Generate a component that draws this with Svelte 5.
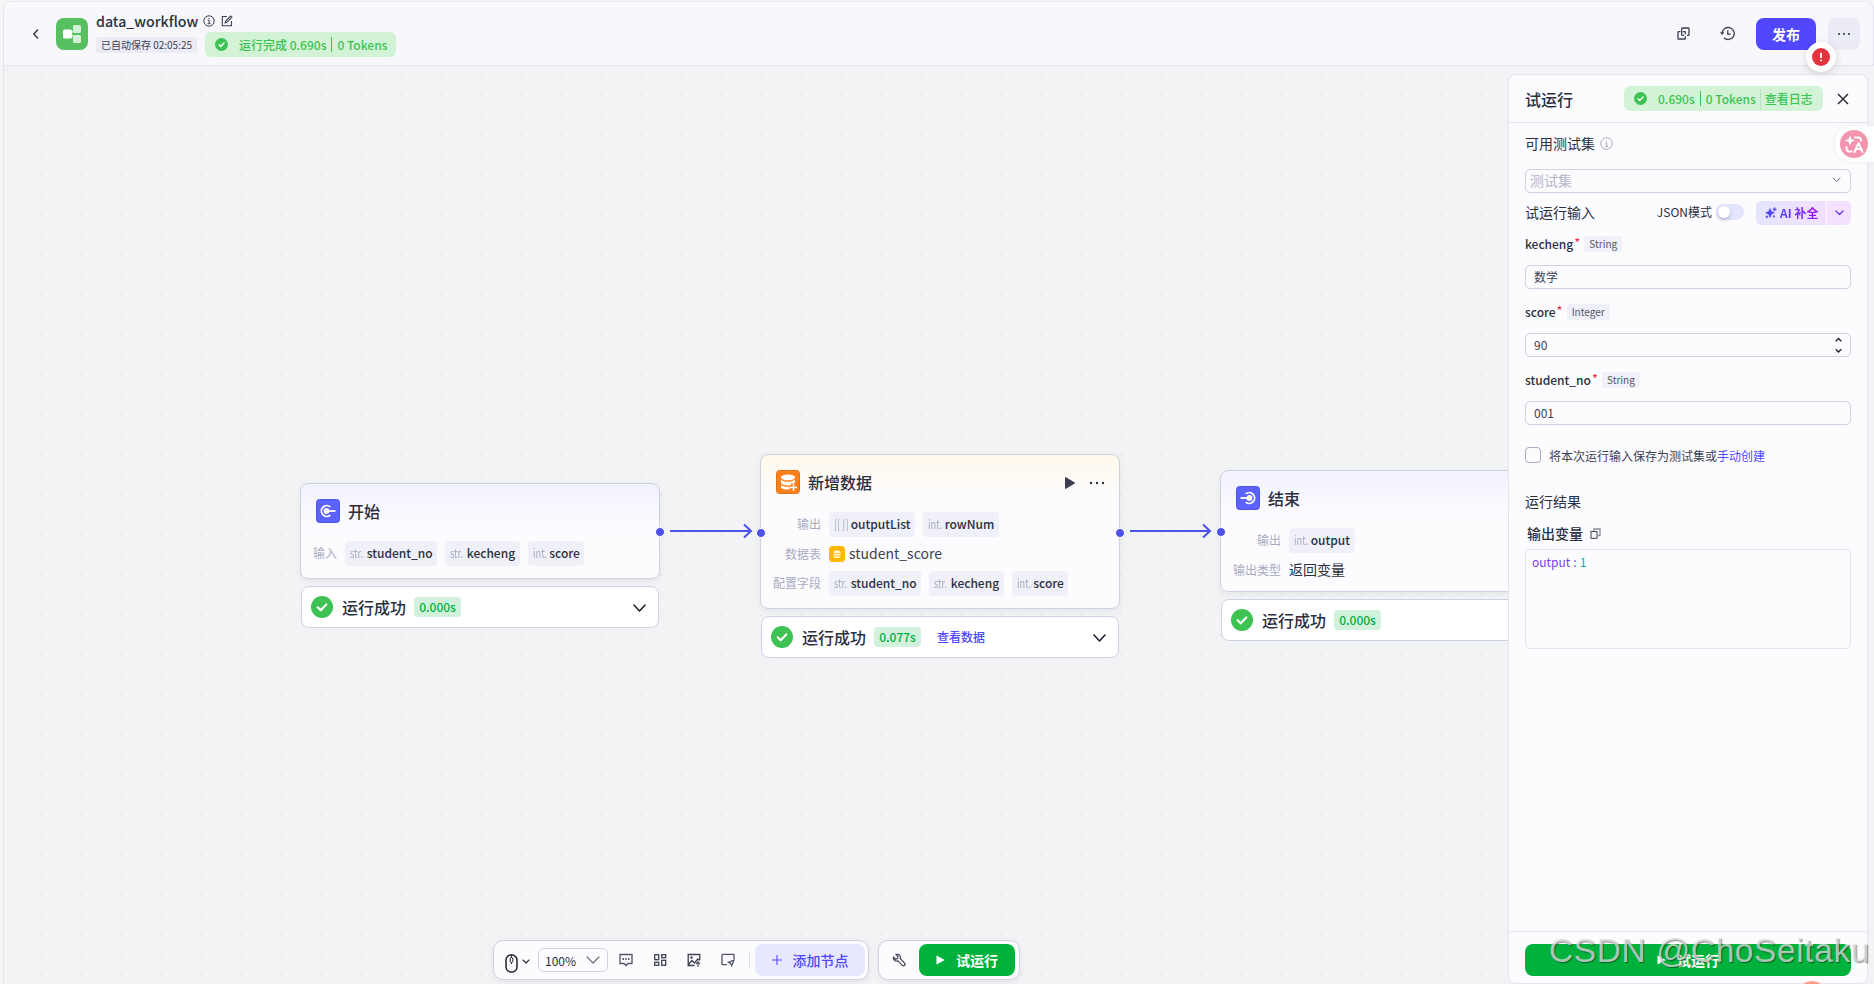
<script>
  const fields = [
    { name: 'kecheng', type: 'String', value: '数学' },
    { name: 'score', type: 'Integer', value: '90', spinner: true },
    { name: 'student_no', type: 'String', value: '001' }
  ];
  const str = (name) => ({ type: 'str.', name });
  const int = (name) => ({ type: 'int.', name });
  const nodes = [
    {
      x: 297, y: 417, h: 96, kind: 'start', title: '开始', time: '0.000s',
      rows: [{ label: '输入', chips: [str('student_no'), str('kecheng'), int('score')] }]
    },
    {
      x: 757, y: 388, h: 155, kind: 'data', title: '新增数据', time: '0.077s', link: '查看数据',
      rows: [
        { label: '输出', chips: [{ type: '[{ }]', name: 'outputList' }, int('rowNum')] },
        { label: '数据表', table: 'student_score' },
        { label: '配置字段', chips: [str('student_no'), str('kecheng'), int('score')] }
      ]
    },
    {
      x: 1217, y: 404, h: 122, kind: 'end', title: '结束', time: '0.000s',
      rows: [
        { label: '输出', chips: [int('output')] },
        { label: '输出类型', text: '返回变量' }
      ]
    }
  ];
  const ports = [[657, 466], [758, 467], [1117, 467], [1218, 466]];
</script>

{#snippet check(size)}
  <svg width={size} height={size} viewBox="0 0 22 22">
    <circle cx="11" cy="11" r="11" fill="#3ec254" />
    <path d="M6.700 11.300l3 3 5.600-5.800" fill="none" stroke="#fff" stroke-width="2.200" stroke-linecap="round" stroke-linejoin="round" />
  </svg>
{/snippet}

{#snippet chevron(w, h, color, sw)}
  <svg width={w} height={h} viewBox="0 0 {w} {h}" fill="none" stroke={color} stroke-width={sw} stroke-linecap="round" stroke-linejoin="round">
    <path d="M1 1L{w / 2} {h - 1}L{w - 1} 1" />
  </svg>
{/snippet}

<div class="app">
  <header>
    <svg class="back" width="8" height="12" viewBox="0 0 8 12" fill="none" stroke="#2b2f3f" stroke-width="1.300"><path d="M6 1.500L1.800 6 6 10.500" /></svg>
    <div class="logo">
      <svg width="32" height="32" viewBox="0 0 32 32">
        <path d="M15 15l4-3M15 16l4 4.500" stroke="#c5eac9" stroke-width="1.500" />
        <rect x="17" y="7" width="8" height="8" rx="1.500" fill="#d5f0d8" />
        <rect x="17" y="17" width="8" height="8" rx="1.500" fill="#d5f0d8" />
        <rect x="7" y="11.500" width="9" height="9" rx="1.500" fill="#fff" />
      </svg>
    </div>
    <div class="heading">
      <div class="name">
        <b>data_workflow</b>
        <svg width="12" height="12" viewBox="0 0 12 12" fill="none" stroke="#3d4152"><circle cx="6" cy="6" r="5.200" /><path d="M4.800 5.200h1.400v3.400M4.600 8.700h3M6 2.900v1.100" /></svg>
        <svg class="edit" width="12" height="12" viewBox="0 0 12 12" fill="none" stroke="#3d4152" stroke-width="1.100"><path d="M6 1.500H1.300v9.200h9.200V6M4.200 7.900l.5-1.900L9.600 1l1.300 1.300-4.900 5z" /></svg>
      </div>
      <div class="meta">
        <span class="saved">已自动保存 02:05:25</span>
        <span class="pill done">{@render check(13)}<span class="run">运行完成 0.690s</span><i></i><span>0 Tokens</span></span>
      </div>
    </div>
    <div class="actions">
      <svg width="13" height="13" viewBox="0 0 13 13" fill="none" stroke="#3d4152" stroke-width="1.300"><path d="M3.500 4.700H1.600a.6.600 0 0 0-.6.600v6.100c0 .3.300.6.600.6h6.100c.3 0 .6-.3.600-.6V9.500M6 4.700h1.700c.3 0 .6.300.6.600v2" /><path d="M7 8.300H5.300a.6.600 0 0 1-.6-.6V1.600c0-.3.300-.6.600-.6h6.100c.3 0 .6.300.6.600v6.100c0 .3-.3.600-.6.600H10" /></svg>
      <svg class="history" width="15" height="15" viewBox="0 0 15 15" fill="none" stroke="#3d4152" stroke-width="1.300"><path d="M2.200 7.500a6 6 0 1 1 1.700 4.200M7.800 4.200v4h3" /><path d="M0 6.300h4.400L2.200 9z" fill="#3d4152" stroke="none" /></svg>
      <div class="publish">发布<span class="error"><svg width="18" height="18" viewBox="0 0 18 18"><circle cx="9" cy="9" r="9" fill="#e5323f" /><path d="M9 4.800v5.200M9 11.700v1.500" stroke="#fff" stroke-width="1.800" /></svg></span></div>
      <div class="more"><svg width="12" height="2" viewBox="0 0 12 2" fill="#2b2f3f"><circle cx="1" cy="1" r="1" /><circle cx="6" cy="1" r="1" /><circle cx="11" cy="1" r="1" /></svg></div>
    </div>
  </header>

  <main>
    <div class="canvas">
      {#each nodes as n}
        <div class="node {n.kind}" style="left:{n.x}px;top:{n.y}px;height:{n.h}px">
          <div class="node-head">
            <svg class="node-icon" width="24" height="24" viewBox="0 0 24 24">
              {#if n.kind === 'data'}
                <rect x=".5" y=".5" width="23" height="23" rx="3" fill="#ff811a" stroke="#d97322" />
                <ellipse cx="12" cy="7.400" rx="7" ry="2.900" fill="#fff" />
                <path d="M5 9.500c1.500 1.800 4 2.300 7 2.300s5.500-.5 7-2.300v2.700c0 .4-.4.900-1 1.300h-3v1.800c-5 .6-9.500-.4-10-2.700zM5 14.700c1.500 1.600 5 2.300 8.500 2v2.600C9 19.900 5.300 19 5 17.300z" fill="#fff" />
                <path d="M17.500 14v7M14 17.500h7" stroke="#fff" stroke-width="1.500" />
              {:else}
                <rect x=".5" y=".5" width="23" height="23" rx="3" fill="#5c62ff" stroke="#5055e0" />
                <g transform={n.kind === 'end' ? 'translate(24 0) scale(-1 1)' : undefined}>
                  <path d="M14.300 7.900A5.400 5.400 0 1 0 14.300 16.100" fill="none" stroke="#fff" stroke-width="1.800" />
                  <circle cx="10.500" cy="12" r="2.900" fill="#fff" />
                  <path d="M11 12h8.500" stroke="#fff" stroke-width="1.800" />
                </g>
              {/if}
            </svg>
            <span>{n.title}</span>
            {#if n.kind === 'data'}
              <svg class="play" width="10" height="12" viewBox="0 0 10 12"><path d="M.5.500L9.700 6 .5 11.500z" fill="#3a3d50" stroke="#3a3d50" stroke-linejoin="round" /></svg>
              <svg width="16" height="4" viewBox="0 0 16 4" fill="#2b2f3f"><circle cx="2" cy="2" r="1.200" /><circle cx="8" cy="2" r="1.200" /><circle cx="14" cy="2" r="1.200" /></svg>
            {/if}
          </div>
          <div class="rows">
            {#each n.rows as r}
              <span class="label">{r.label}</span>
              <div class="vals">
                {#if r.chips}
                  {#each r.chips as c}
                    <span class="chip"><span class="ty"><em>{c.type}</em></span>{c.name}</span>
                  {/each}
                {:else if r.table}
                  <svg width="16" height="16" viewBox="0 0 16 16"><rect width="16" height="16" rx="3.500" fill="#ffb803" /><rect x="4.500" y="4.500" width="7" height="7.500" rx="2.500" fill="#fff6dc" /><path d="M4.500 7c2 1 5 1 7 0M4.500 9.300c2 1 5 1 7 0" stroke="#ffb803" fill="none" stroke-width=".8" /></svg>
                  <span class="plain">{r.table}</span>
                {:else}
                  <span class="plain strong">{r.text}</span>
                {/if}
              </div>
            {/each}
          </div>
        </div>
        <div class="status" style="left:{n.x + 1}px;top:{n.y + n.h + 7}px">
          {@render check(22)}
          <span class="ok">运行成功</span>
          <span class="time">{n.time}</span>
          {#if n.link}<a>{n.link}</a>{/if}
          <span class="caret">{@render chevron(13, 8, '#20222e', 1.6)}</span>
        </div>
      {/each}
      <svg class="edges" width="1230" height="490" fill="none" stroke="#4d53e8" stroke-width="2">
        <path d="M667 465h80M741 458.500l7 6.500-7 6.500M1127 465h79M1200 458.500l7 6.500-7 6.500" />
        {#each ports as [x, y]}
          <circle cx={x} cy={y} r="4.500" fill="#4d53e8" stroke="#fff" stroke-width="1" />
        {/each}
      </svg>
    </div>

    <div class="toolbars">
      <div class="bar tools">
        <svg class="mouse" width="13" height="19" viewBox="0 0 13 19" fill="none" stroke="#20222e" stroke-width="1.500"><rect x="1" y="1" width="11" height="17" rx="5" /><rect x="5.200" y="3.500" width="2.600" height="5" rx="1.300" stroke-width="1" /><path d="M6.500 1v2.500M6.500 8.500v1.500" stroke-width="1" /></svg>
        <span class="mini">{@render chevron(8, 5, '#2b2f3f', 1.1)}</span>
        <div class="zoom">100%{@render chevron(14, 8, '#6b6f80', 1.3)}</div>
        <svg width="14" height="14" viewBox="0 0 14 14" fill="none" stroke="#50546a" stroke-width="1.300"><path d="M1 1.500h12v9H9L7 12.500 5 10.500H1z" /><path d="M3.500 6h1.500M6.200 6h1.500M9 6h1.500" stroke="#20222e" stroke-width="1.500" /></svg>
        <svg width="14" height="14" viewBox="0 0 14 14" fill="none" stroke="#3d4152" stroke-width="1.300"><rect x="1.700" y="1.700" width="4" height="5" /><rect x="8.700" y="1.700" width="4" height="3" /><rect x="1.700" y="9.300" width="4" height="3" /><rect x="8.700" y="7.300" width="4" height="5" /></svg>
        <svg width="14" height="14" viewBox="0 0 14 14" fill="none" stroke="#3d4152" stroke-width="1.300"><path d="M12.800 7V1.500H1.200v11H7.500M1.500 11.500l3.500-4 2.500 2.500 3.300-4 2 1.500" /><circle cx="4.500" cy="4.500" r=".6" /><path d="M11 13.800V8.800M9 11l2-2.200 2 2.200" stroke-width="1.100" /></svg>
        <svg width="14" height="14" viewBox="0 0 14 14" fill="none" stroke="#50546a" stroke-width="1.300"><path d="M13 6V2a.7.700 0 0 0-.7-.7H1.700a.7.700 0 0 0-.7.700v9c0 .4.300.7.700.7H6" /><path d="M13 7L7.500 9.300l2 1 1.200 2.300z" /></svg>
        <i class="sep"></i>
        <div class="add"><svg width="10" height="10" viewBox="0 0 10 10" stroke="#5147ff" stroke-width="1.100"><path d="M5 0v10M0 5h10" /></svg>添加节点</div>
      </div>
      <div class="bar runbar">
        <svg width="14" height="14" viewBox="0 0 14 14" fill="none" stroke="#3d4152" stroke-width="1.200"><path d="M4.800 1.300a3.300 3.300 0 0 1 3.500 4.200l4.300 4.600a1.500 1.500 0 0 1-2.200 2.200L6 7.900A3.300 3.300 0 0 1 1.500 4.200l2 2 2-.6.500-2-2-2z" /></svg>
        <div class="go"><svg width="9" height="10" viewBox="0 0 9 10"><path d="M.5.500L8.800 5 .5 9.500z" fill="#fff" /></svg>试运行</div>
      </div>
    </div>

    <aside>
      <div class="p-head">
        <h2>试运行</h2>
        <span class="pill log">{@render check(13)}<span class="run">0.690s</span><i></i><span>0 Tokens</span><u></u><span class="view">查看日志</span></span>
        <svg width="12" height="12" viewBox="0 0 12 12" stroke="#20222e" stroke-width="1.400"><path d="M1 1l10 10M11 1L1 11" /></svg>
      </div>
      <div class="p-body">
        <div class="line set">可用测试集<svg width="13" height="13" viewBox="0 0 13 13" fill="none" stroke="#a6a8bd"><circle cx="6.500" cy="6.500" r="5.800" /><path d="M5.300 5.800h1.400v3.500M5.200 9.500h3M6.500 3.300v1.200" /></svg></div>
        <div class="input select">测试集{@render chevron(9, 5.5, '#6b6f80', 1)}</div>
        <div class="line mode">
          <span class="cap">试运行输入</span>
          <span class="json">JSON模式</span>
          <span class="toggle"></span>
          <span class="ai">
            <svg width="12" height="12" viewBox="0 0 12 12" fill="#5147ff" stroke="#5147ff" stroke-width=".5" stroke-linejoin="round"><path d="M5 1.500l1.400 2.900 3 1.400-3 1.400L5 10.600 3.600 7.200.5 5.800l3.100-1.400zM9.600.3l.6 1.400 1.400.6-1.400.6-.6 1.400L9 2.900l-1.400-.6L9 1.700z" /><circle cx="1.800" cy="9.800" r="1" /><circle cx="8.900" cy="9.400" r=".8" /></svg>
            <b>AI 补全</b>
          </span>
          <span class="ai-more">{@render chevron(9, 5.5, '#6a32f0', 1.3)}</span>
        </div>
        {#each fields as f}
          <div class="field"><span class="fname">{f.name}</span><sup>*</sup><span class="tag">{f.type}</span></div>
          <div class="input">
            {f.value}
            {#if f.spinner}
              <svg width="7" height="17" viewBox="0 0 7 17" fill="none" stroke="#20222e" stroke-width="1.400"><path d="M.7 4.200l2.800-2.800 2.800 2.800M.7 12.300l2.800 2.800 2.800-2.800" /></svg>
            {/if}
          </div>
        {/each}
        <div class="save"><i></i><span>将本次运行输入保存为测试集或<a>手动创建</a></span></div>
        <div class="line result">运行结果</div>
        <div class="line vars">输出变量<svg width="11" height="11" viewBox="0 0 11 11" fill="none" stroke="#3d4152"><rect x="1" y="3.500" width="6" height="6.800" /><path d="M3.800 3V1H10v6.500H7.500" stroke="#8a8d9c" stroke-width="1.300" /></svg></div>
        <div class="output"><span>output</span><span>:</span><span class="num">1</span></div>
      </div>
      <div class="p-foot"><div class="go wide"><svg width="9" height="10" viewBox="0 0 9 10"><path d="M.5.500L8.800 5 .5 9.500z" fill="#fff" /></svg>试运行</div></div>
    </aside>

    <div class="helper"><svg width="28" height="28" viewBox="0 0 28 28"><circle cx="14" cy="14" r="14" fill="#f394ae" /><g fill="none" stroke="#fff" stroke-width="2" stroke-linecap="round" stroke-linejoin="round"><path d="M15 7.500h3.500a2.500 2.500 0 0 1 2.500 2.500v.5M6.500 17v1.500a3 3 0 0 0 3 3h2" /><path d="M14.500 22l4-9 4 9M16 19h5" /></g><path d="M10 5.500l1.400 3.600 3.600 1.400-3.600 1.400L10 15.500l-1.400-3.600L5 10.500l3.600-1.400z" fill="#fff" /></svg></div>
    <div class="bubble"></div>
    <div class="mark">CSDN @ChoSeitaku</div>
  </main>
</div>

<style>
  :global(body) { background: #f5f5f6; overflow: hidden; }
  .app, .app * { box-sizing: border-box; }
  .app {
    height: 984px; padding: 1px 0 0 3px; display: flex; flex-direction: column; overflow: hidden;
    font-family: "Noto Sans CJK SC", sans-serif; font-size: 12px; color: #2b2f3f; white-space: nowrap;
  }
  svg { display: block; flex: none; }
  i, em { font-style: normal; }
  a { color: #5147ff; }

  header {
    height: 65px; flex: none; display: flex; align-items: center; padding: 0 13px 0 28px;
    background: #f7f7fc; border: 1px solid #e3e4ef; border-top-color: #ececf0; border-radius: 8px 8px 0 0;
  }
  .back { margin-right: 16px; }
  .logo { width: 32px; height: 32px; border-radius: 8px; background: #57bf60; }
  .heading { margin-left: 8px; height: 57px; }
  .name { display: flex; align-items: center; height: 29px; padding-top: 3px; }
  .name b { font-weight: 500; font-size: 14.200px; line-height: 20px; margin-right: 4.500px; }
  .edit { margin-left: 6px; }
  .meta { display: flex; align-items: center; gap: 8px; margin-top: -2px; }
  .saved { height: 16px; line-height: 16px; width: 101px; text-align: center; font-size: 10px; background: #ebebf5; border-radius: 3px; color: #3d4152; }
  .pill { display: flex; align-items: center; height: 25px; background: #d2f3d5; border-radius: 6px; color: #3ec254; padding: 0 9px 0 10px; font-weight: 500; }
  .pill .run { margin-left: 11px; }
  .pill i { flex: none; width: 1px; height: 15px; background: #3ec254; margin: 0 5px; }
  .pill u { flex: none; width: 1px; height: 20px; background: #b7dfc0; margin: 0 4px; }
  .actions { margin-left: auto; display: flex; align-items: center; }
  .history { margin: 0 21px 0 30px; }
  .publish { position: relative; width: 60px; height: 32px; line-height: 32px; border-radius: 8px; background: #5147ff; color: #fff; font-weight: 700; font-size: 14px; text-align: center; }
  .error { position: absolute; z-index: 6; left: 50px; top: 24px; width: 30px; height: 30px; border-radius: 50%; background: #fff; display: flex; align-items: center; justify-content: center; box-shadow: 0 2px 8px #00000024; }
  .more { width: 32px; height: 32px; margin-left: 12px; border-radius: 8px; background: #ebebf5; display: flex; align-items: center; justify-content: center; }

  main { flex: 1; min-height: 0; position: relative; display: flex; justify-content: flex-end; background: #f2f3f5; border-left: 1px solid #e3e4ea; padding-right: 6px; }
  .canvas {
    position: absolute; inset: 0 0 0 -1px; overflow: hidden;
    background-image: radial-gradient(circle, #e9eaed 1px, transparent 1.500px); background-size: 20px 20px; background-position: 8px -1px;
  }
  .node { position: absolute; width: 360px; border: 1px solid #cfd0e1; border-radius: 8px; padding: 15px 12px 0; background: linear-gradient(#f2f2ff, #fcfcff 48px); box-shadow: 0 2px 6px #0000000f; }
  .node.data { background: linear-gradient(#fff9ea, #fcfcff 44px); }
  .node-head { display: flex; align-items: center; height: 24px; padding: 0 2px 0 3px; font-size: 16px; font-weight: 500; }
  .node-head span { margin-left: 8px; line-height: 24px; }
  .play { margin: 2px 14px 0 auto; }
  .play + svg { margin-top: 2px; }
  .rows { display: grid; grid-template-columns: auto 1fr; column-gap: 8px; row-gap: 4.500px; margin-top: 18px; }
  .label { color: #a9abc0; text-align: right; line-height: 23px; }
  .vals { display: flex; align-items: center; gap: 8px; height: 25px; }
  .vals svg { margin: -1px -4px 0 0; }
  .chip { display: flex; height: 25px; line-height: 23px; padding: 0 4.500px 0 5px; border-radius: 4px; background: #f0f0f9; font-weight: 500; }
  .ty { color: #a9abc0; font-weight: 400; width: 16.700px; overflow: visible; }
  .ty em { display: inline-block; transform: scaleX(.77); transform-origin: 0 50%; line-height: 22px; }
  .plain { font-size: 14px; line-height: 23px; padding-bottom: 2px; color: #3d4152; }
  .strong { color: #2b2f3f; }
  .status { position: absolute; width: 358px; height: 42px; background: #fff; border: 1px solid #cfd0e1; border-radius: 8px; display: flex; align-items: center; padding: 0 12px 0 9px; }
  .ok { margin-left: 9px; font-size: 16px; font-weight: 500; line-height: 24px; padding-bottom: 1px; }
  .time { margin-left: 8px; width: 47px; height: 20px; line-height: 20px; text-align: center; border-radius: 4px; background: #d2f1dc; color: #00ae3c; font-weight: 500; }
  .status a { margin-left: 16px; font-weight: 500; line-height: 20px; padding-bottom: 1px; }
  .caret { margin-left: auto; padding-top: 1px; }
  .edges { position: absolute; left: 0; top: 0; }

  .toolbars { position: absolute; left: 489px; top: 874px; display: flex; gap: 9px; }
  .bar { height: 40px; border: 1px solid #d0d1e2; border-radius: 10px; background: #fcfcff; display: flex; align-items: center; box-shadow: 0 2px 6px #0000000f; }
  .tools { width: 376px; padding: 0 3px 0 11px; gap: 20px; }
  .mouse { margin-top: 7px; }
  .mini { margin: 3px 0 0 -16px; }
  .zoom { flex: none; width: 70px; height: 24px; margin: 0 -9px 0 -12px; border: 1px solid #cfd0e1; border-radius: 6px; display: flex; align-items: center; justify-content: space-between; padding: 0 7px 0 6px; }
  .sep { flex: none; width: 1px; height: 16px; background: #dfe0ea; margin: 0 -20px 0 -6px; }
  .add { flex: none; margin-left: auto; width: 110px; height: 32px; border-radius: 8px; background: #e6e8ff; color: #5147ff; font-weight: 500; font-size: 14px; display: flex; align-items: center; justify-content: center; gap: 11px; }
  .runbar { width: 142px; padding: 0 4px 0 13px; justify-content: space-between; }
  .go { width: 96px; height: 32px; border-radius: 8px; background: #00b23c; color: #fff; font-weight: 700; font-size: 14px; display: flex; align-items: center; justify-content: center; gap: 11px; }

  aside { position: relative; width: 360px; margin-top: 8px; background: #fcfcff; border: 1px solid #e3e4ef; border-radius: 8px; display: flex; flex-direction: column; }
  .p-head { height: 48px; border-bottom: 1px solid #e3e4ef; display: flex; align-items: center; padding: 0 18px 0 16px; }
  h2 { margin: 0 auto 0 0; font-size: 16px; font-weight: 500; line-height: 24px; padding-top: 1px; }
  .log { width: 199px; margin: 0 14px 0 0; }
  .p-body { flex: 1; padding: 11px 16px 0; }
  .line { display: flex; align-items: center; height: 20px; line-height: 20px; padding-bottom: 2px; font-size: 14px; }
  .set svg { margin: 1px 0 0 5px; }
  .input { height: 24px; line-height: 20px; margin-top: 13px; border: 1px solid #cfd0e1; border-radius: 5px; display: flex; align-items: center; justify-content: space-between; padding: 0 8px; color: #3d4152; }
  .select { margin-top: 15px; font-size: 14px; color: #b3b5c8; padding: 0 9px 2px 4px; }
  .mode { height: 24px; margin-top: 8px; padding: 0; }
  .cap { padding-bottom: 2px; }
  .json { margin-left: auto; font-size: 12px; line-height: 20px; margin-top: -2px; }
  .toggle { width: 28px; height: 16px; margin: -2px 12px 0 4px; border-radius: 8px; background: #e4e5ff; }
  .toggle::before { content: ""; display: block; width: 12px; height: 12px; margin: 2px; border-radius: 50%; background: #fff; box-shadow: 0 2px 4px #00000038; }
  .ai { width: 70px; height: 24px; padding-left: 9px; display: flex; align-items: center; gap: 3px; border-radius: 5px 0 0 5px; background: linear-gradient(90deg, #e4e5ff, #f1e0ff); font-size: 12px; }
  .ai b { padding-bottom: 1px; background: linear-gradient(90deg, #5147ff, #a010f0); background-clip: text; -webkit-background-clip: text; color: transparent; font-weight: 700; }
  .ai-more { width: 24px; height: 24px; margin-left: 1px; display: flex; align-items: center; justify-content: center; border-radius: 0 5px 5px 0; background: #f4e0ff; }
  .field { height: 16px; margin-top: 15px; display: flex; align-items: center; font-weight: 500; }
  .fname { line-height: 18px; }
  .mode + .field { margin-top: 11px; }
  sup { color: #e5323f; line-height: 16px; margin: -2px 4px 0 1px; font-size: 13px; font-weight: 400; }
  .tag { height: 16px; line-height: 16px; padding: 0 5px; border-radius: 3px; background: #f0f0f9; color: #50546a; font-size: 10px; font-weight: 400; }
  .save { display: flex; align-items: center; height: 16px; margin-top: 22px; gap: 8px; color: #3d4152; }
  .save i { width: 16px; height: 16px; border: 1px solid #a9abc0; border-radius: 4px; }
  .result { margin-top: 29px; }
  .vars { margin: 12px 0 0 2px; font-weight: 500; }
  .vars svg { margin-left: 7px; }
  .output { height: 100px; margin-top: 5px; border: 1px solid #e3e4ef; border-radius: 5px; padding: 3px 6px; line-height: 18px; display: flex; gap: 3px; color: #7a3cff; }
  .num { color: #00b2b8; }
  .p-foot { height: 52px; border-top: 1px solid #e3e4ef; padding: 12px 16px 0; }
  .wide { width: 326px; }

  .helper { position: absolute; right: 0; top: 60px; width: 39px; height: 36px; padding: 4px 0 0 5px; border-radius: 18px 0 0 18px; background: #fff; box-shadow: 0 0 6px #0000000f; }
  .bubble { position: absolute; right: 47px; top: 915px; width: 30px; height: 30px; border-radius: 50%; background: #ff9d8a; }
  .mark { position: absolute; left: 1545px; top: 865px; font: 33.500px/40px "Liberation Sans", sans-serif; letter-spacing: .6px; color: #e2e2e2c0; text-shadow: 1px 1px 1px #00000070; }
</style>
